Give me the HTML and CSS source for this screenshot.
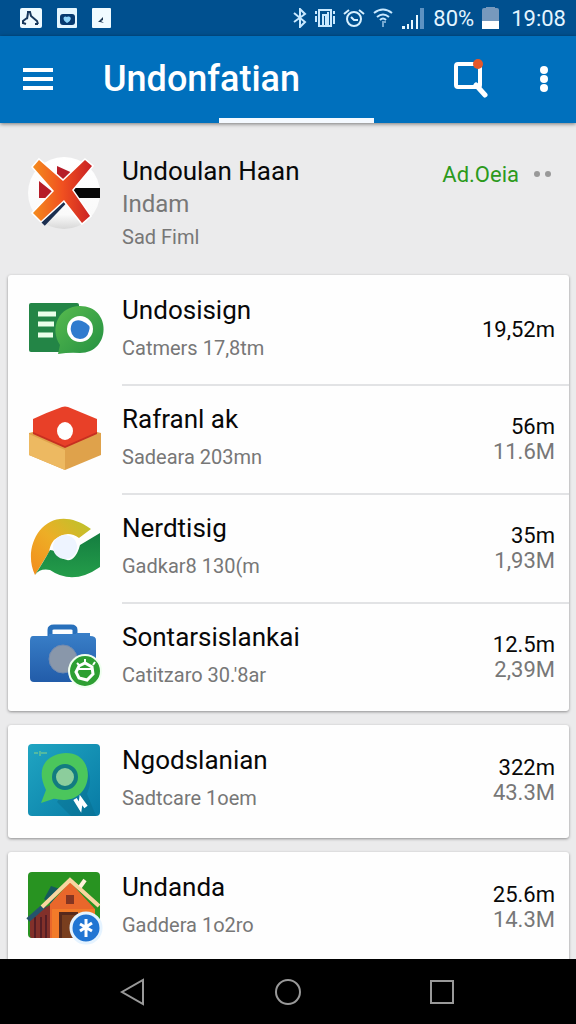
FILE: index.html
```html
<!DOCTYPE html>
<html lang="en">
<head>
<meta charset="utf-8">
<meta name="viewport" content="width=device-width, initial-scale=1">
<title>Undonfatian</title>
<link rel="stylesheet" href="styles.css">
</head>
<body>
<div class="status">
  <div class="status-apps">
    <svg width="22" height="20" viewBox="0 0 22 20"><rect width="22" height="20" rx="2" fill="#eefaff"/><path d="M3 16v-3l4-3m0-6h3l1 4 6 5 1 3M8 5l-1 6M3 15l3 1m9 0h3" fill="none" stroke="#17375b" stroke-width="2"/></svg>
    <svg width="20" height="20" viewBox="0 0 20 20"><rect width="20" height="20" rx="1" fill="#e4f6ff"/><rect x="3" y="6" width="15" height="11" rx="3" fill="#073a70"/><path d="M10 15C4 11 7 7 10 9c4-2 6 3 0 6z" fill="#8ed4fa"/></svg>
    <svg width="19" height="20" viewBox="0 0 19 20"><rect width="19" height="20" rx="1" fill="#f0fbff"/><path d="M6 14l5-5v3l-2 1 3 2-4-1z" fill="#1b3550"/></svg>
  </div>
  <div class="status-system">
    <svg width="14" height="20" viewBox="0 0 14 20"><path d="M1 5l11 9-5 5V1l5 5-11 8" fill="none" stroke="#c9e9ff" stroke-width="2"/></svg>
    <svg width="20" height="20" viewBox="0 0 20 20"><path d="M1 3v3m0 2v6m18-11v3m0 2v8M4 2h12v16H4zM8 18V7h3v11M13 4v14" fill="none" stroke="#c9e9ff" stroke-width="2"/></svg>
    <svg width="22" height="20" viewBox="0 0 22 20"><circle cx="11" cy="11" r="7" fill="none" stroke="#d8f1ff" stroke-width="2"/><path d="M1 6l5-4m15 4l-5-4M8 9l3 3h4" fill="none" stroke="#d8f1ff" stroke-width="2"/></svg>
    <svg width="20" height="20" viewBox="0 0 20 20"><path d="M1 5q9-7 18 0M4 9q6-5 12 0M7 12q3-3 6 0" fill="none" stroke="#c9e9ff" stroke-width="2"/><path d="M10 19v-5h3" fill="none" stroke="#74a7d0" stroke-width="2"/></svg>
    <svg width="24" height="22" viewBox="0 0 24 22"><path d="M1 22v-3h3v3zm5 0v-5h2v5zm4 0v-9h2v9zm5 0V8h2v14z" fill="#e8f8ff"/><path d="M19 22V1h4v21z" fill="#5d92c2"/></svg>
    <span class="status-battery">80%</span>
    <svg width="17" height="22" viewBox="0 0 17 22"><path d="M0 3q0-2 2-2h2V0h9v1h2q2 0 2 2v11H0z" fill="#7799bd"/><path d="M0 14h17v8H0z" fill="#fff"/></svg>
    <span class="status-time">19:08</span>
  </div>
</div>
<header class="appbar">
  <div class="appbar-row">
    <button class="icon-button" aria-label="Menu"><svg width="30" height="24" viewBox="0 0 30 24"><path d="M0 3h30M0 12h30M0 21h30" stroke="#fff" stroke-width="4"/></svg></button>
    <h1 class="title">Undonfatian</h1>
    <button class="icon-button" aria-label="Search"><svg width="34" height="40" viewBox="0 0 34 40"><rect x="2" y="5" width="24" height="23" rx="2" fill="none" stroke="#fff" stroke-width="4"/><path d="M22 26l9 10" stroke="#fff" stroke-width="5" stroke-linecap="round"/><circle cx="24" cy="5" r="5" fill="#e4572b"/></svg></button>
    <button class="icon-button more" aria-label="More options"><svg width="8" height="28" viewBox="0 0 8 28"><g fill="#fff"><circle cx="4" cy="5" r="4"/><circle cx="4" cy="14" r="4"/><circle cx="4" cy="23" r="4"/></g></svg></button>
  </div>
  <div class="tab-indicator"></div>
</header>
<main class="content">
  <section class="profile">
    <svg class="pic" viewBox="0 0 72 72">
      <defs><linearGradient id="cross" x2="1"><stop stop-color="#f48b1d"/><stop offset=".5" stop-color="#f05020"/><stop offset="1" stop-color="#c92024"/></linearGradient><linearGradient id="disc" x2="0" y2="1"><stop stop-color="#fff"/><stop offset=".8" stop-color="#fafafa"/><stop offset="1" stop-color="#d8d8d8"/></linearGradient></defs>
      <circle cx="36" cy="36" r="36" fill="url(#disc)"/>
      <path d="M29 9l20 9-10 17-10-11zM11 24l15 12-7 5h-8z" fill="#b61c28"/><path d="M40 31h32v10H46z" fill="#080808"/><path d="M36 45L15 67" stroke="#1c2f50" stroke-width="5"/>
      <path d="M11 3L5 10l21 24L5 56l8 8 23-21 18 23 8-7-18-26L64 9l-7-6-22 21z" fill="#fff" stroke="#fff" stroke-width="3"/>
      <path d="M11 3L5 10l21 24L5 56l8 8 23-21 18 23 8-7-18-26L64 9l-7-6-22 21z" fill="url(#cross)"/>
    </svg>
    <div class="text">
      <h2 class="name">Undoulan Haan</h2>
      <p class="detail place">Indam</p>
      <p class="detail">Sad Fiml</p>
    </div>
    <div class="balance"><span>Ad.Oeia</span><svg width="18" height="6" viewBox="0 0 18 6"><g fill="#999"><circle cx="3" cy="3" r="3"/><circle cx="14" cy="3" r="3"/></g></svg></div>
  </section>

  <ul class="card">
    <li class="row">
      <svg class="pic" viewBox="0 0 72 72"><defs><linearGradient id="bubble" x2="1" y2="1"><stop stop-color="#58bb4e"/><stop offset="1" stop-color="#249042"/></linearGradient></defs><rect x="1" y="9" width="50" height="49" rx="2" fill="#238546"/><path d="M10 20h18M10 30h16M10 41h15" stroke="#eaffe9" stroke-width="5"/><path d="M30 60l2-9c-11-17-1-39 20-39 32 0 31 47 0 47q-10-1-22 1z" fill="url(#bubble)"/><circle cx="52" cy="35" r="13" fill="#fff"/><path d="M45 28q4-3 9-1 10 4 7 10-2 8-9 8-8-1-9-8-1-5 2-9z" fill="#2f7bce"/></svg>
      <div class="text"><h2 class="name">Undosisign</h2><p class="detail">Catmers 17,8tm</p></div>
      <div class="values"><span>19,52m</span></div>
    </li>
    <li class="row">
      <svg class="pic" viewBox="0 0 72 72"><path d="M1 30l36-9 36 9v22L37 67 1 52z" fill="#dfa24b"/><path d="M1 31l36 16v20L1 52z" fill="#edb961"/><path d="M5 17L37 4l32 13v14L37 45 5 31z" fill="#c72f21"/><path d="M5 16Q20 9 34 4q3-1 6 0l29 12v13L37 43 5 29z" fill="#e84028"/><ellipse cx="37" cy="28" rx="8" ry="9" fill="#fff"/></svg>
      <div class="text"><h2 class="name">Rafranl ak</h2><p class="detail">Sadeara 203mn</p></div>
      <div class="values"><span>56m</span><span class="muted">11.6M</span></div>
    </li>
    <li class="row">
      <svg class="pic" viewBox="0 0 72 72"><defs><linearGradient id="arc" x1="0" y1="1" x2="1" y2="0"><stop stop-color="#f38c1d"/><stop offset=".5" stop-color="#edae26"/><stop offset="1" stop-color="#b8c42c"/></linearGradient><linearGradient id="wave" x2="0" y2="1"><stop stop-color="#147d40"/><stop offset="1" stop-color="#249d4a"/></linearGradient></defs><path d="M7 63C-8 32 20-14 63 17L51 26Q39 17 26 28q-4 5-5 12z" fill="url(#arc)"/><path d="M7 63q9-14 15-25 6 0 10 7 14 10 20-12l20-12v34q-27 19-50 3-10-2-15 5z" fill="url(#wave)"/><circle cx="37" cy="35" r="12" fill="#eef4ff"/></svg>
      <div class="text"><h2 class="name">Nerdtisig</h2><p class="detail">Gadkar8 130(m</p></div>
      <div class="values"><span>35m</span><span class="muted">1,93M</span></div>
    </li>
    <li class="row">
      <svg class="pic" viewBox="0 0 72 72"><defs><linearGradient id="bag" x2="0" y2="1"><stop stop-color="#397fc8"/><stop offset="1" stop-color="#225ca9"/></linearGradient></defs><path d="M22 18V9q0-3 4-3h17q4 0 4 3v9" fill="none" stroke="#2870bb" stroke-width="5"/><path d="M5 15h16v-2h27v-1h14v3q6 0 6 4v39q0 3-4 3H6q-4 0-4-4V20q0-5 3-5z" fill="url(#bag)"/><circle cx="35" cy="38" r="14" fill="#8997aa" stroke="#718ab0"/><circle cx="57" cy="50" r="16" fill="#2d9f32" stroke="#f0fff0" stroke-width="2"/><path d="M51 45l6-3 7 4 1 7-6 6-8-2-3-6z" fill="none" stroke="#fff" stroke-width="3"/><path d="M57 38v5m-8-1l3 3m13-1l2-3M51 48h12" stroke="#fff" stroke-width="2"/></svg>
      <div class="text"><h2 class="name">Sontarsislankai</h2><p class="detail">Catitzaro 30.'8ar</p></div>
      <div class="values"><span>12.5m</span><span class="muted">2,39M</span></div>
    </li>
  </ul>

  <ul class="card">
    <li class="row">
      <svg class="pic" viewBox="0 0 72 72"><defs><linearGradient id="tile" x2="1" y2="1"><stop stop-color="#20a5c2"/><stop offset="1" stop-color="#087ba5"/></linearGradient></defs><rect width="72" height="72" rx="4" fill="url(#tile)"/><path d="M29 58l25-42q13 17 5 34L68 72H43z" fill="#076a87" opacity=".4"/><path d="M13 59l5-13C5 20 24 9 38 9c31 0 28 47-2 47-5 0-9-2-11-1z" fill="#4bc65c"/><circle cx="37" cy="33" r="11" fill="#8ccd9c" stroke="#127b80" stroke-width="4"/><path d="M6 9h4m2-2v5m1-3h6" stroke="#8bd484"/><path d="M47 55l5 8 1-7 5 7" fill="none" stroke="#fff" stroke-width="4"/></svg>
      <div class="text"><h2 class="name">Ngodslanian</h2><p class="detail">Sadtcare 1oem</p></div>
      <div class="values"><span>322m</span><span class="muted">43.3M</span></div>
    </li>
  </ul>

  <ul class="card">
    <li class="row">
      <svg class="pic" viewBox="0 0 72 72"><rect y="1" width="72" height="66" rx="4" fill="#289321"/><path d="M16 28l7-13 9 3-9 15z" fill="#155a5c"/><path d="M2 45l20-11v33H4q-2 0-2-2z" fill="#82302a"/><path d="M7 46v21m6-21v21m5-23v23" stroke="#551e25" stroke-width="2"/><path d="M22 33l20-22 25 27v29H22z" fill="#e9672b"/><path d="M24 38h43v29H24z" fill="#f27b29"/><path d="M31 41h19v26H31z" fill="#57291c"/><path d="M34 44h14v23H34z" fill="#793e1e"/><path d="M38 24h8v9h-8z" fill="#853522"/><path d="M0 49l17-15" stroke="#25546c" stroke-width="5"/><path d="M14 36L42 9l29 26" fill="none" stroke="#f9d6a0" stroke-width="4"/><path d="M52 16l5-7" stroke="#fff2db" stroke-width="4"/><circle cx="58" cy="57" r="15" fill="#2175d3" stroke="#e5f3ff" stroke-width="3"/><path d="M58 48v18m-6-13l12 7m0-8l-12 8" stroke="#fff" stroke-width="3"/></svg>
      <div class="text"><h2 class="name">Undanda</h2><p class="detail">Gaddera 1o2ro</p></div>
      <div class="values"><span>25.6m</span><span class="muted">14.3M</span></div>
    </li>
  </ul>
</main>
<nav class="navbar">
  <button class="nav-button" aria-label="Back"><svg width="28" height="28" viewBox="0 0 28 28"><path d="M24 2v24L3 14z"/></svg></button>
  <button class="nav-button" aria-label="Home"><svg width="28" height="28" viewBox="0 0 28 28"><circle cx="14" cy="14" r="12"/></svg></button>
  <button class="nav-button" aria-label="Recent apps"><svg width="28" height="28" viewBox="0 0 28 28"><path d="M2 3h22v22H2z"/></svg></button>
</nav>
</body>
</html>
```

FILE: styles.css
```css
* { box-sizing: border-box; }

body {
  margin: 0;
  height: 100vh;
  display: flex;
  flex-direction: column;
  background: #ebebec;
  color: #080808;
  font-family: Roboto, "Liberation Sans", sans-serif;
}

h1, h2, p, ul { margin: 0; padding: 0; font-weight: 400; }

button {
  border: 0;
  padding: 0;
  background: none;
}

svg { display: block; flex: none; }

.status {
  flex: none;
  display: flex;
  justify-content: space-between;
  align-items: center;
  height: 36px;
  padding: 0 10px 0 20px;
  background: #00508f;
  color: #e4f5ff;
  font-size: 22px;
}

.status-apps { display: flex; gap: 15px; }
.status-system { display: flex; align-items: center; gap: 8px; }
.status-time { margin-left: 4px; }

.appbar {
  flex: none;
  position: relative;
  z-index: 1;
  background: #0070bd;
  box-shadow: 0 1px 4px rgba(0, 0, 0, .5);
}

.appbar-row {
  display: flex;
  align-items: center;
  height: 82px;
  padding: 4px 28px 0 23px;
}

.icon-button { flex: none; }
.more { margin-left: 52px; }

.title {
  flex: 1;
  margin-left: 50px;
  color: #fff;
  font-size: 36px;
  font-weight: 500;
  line-height: 44px;
}

.tab-indicator {
  width: 27%;
  height: 5px;
  margin-left: 38%;
  background: #f4f9ff;
}

.content {
  flex: 1;
  min-height: 0;
  overflow-y: auto;
  scrollbar-width: none;
}

.profile {
  display: flex;
  padding: 32px 24px 21px 28px;
}

.pic { width: 72px; height: 72px; overflow: visible; }
.profile .pic { margin-top: 2px; }

.text { flex: 1; margin-left: 22px; }

.name { font-size: 26px; line-height: 38px; }
.detail { font-size: 20px; line-height: 39px; color: #777; }
.profile .name, .profile .detail { line-height: 33px; }
.profile .place { font-size: 24px; }

.balance {
  display: flex;
  align-items: center;
  gap: 15px;
  height: 38px;
  color: #2c9a1c;
  font-size: 22px;
}

.card {
  margin: 0 7px 14px 8px;
  border-radius: 3px;
  background: #fefefe;
  box-shadow: 0 1px 3px rgba(0, 0, 0, .4);
  list-style: none;
}

.row {
  display: flex;
  align-items: center;
  padding: 16px 14px 16px 20px;
  position: relative;
}

.row:only-child { padding-bottom: 20px; }

.row + .row::before {
  content: "";
  position: absolute;
  top: 0;
  left: 114px;
  right: 0;
  height: 2px;
  background: #e2e3e5;
}

.values {
  display: flex;
  flex-direction: column;
  align-items: flex-end;
  font-size: 22px;
  line-height: 25px;
}

.muted { color: #777; }

.navbar {
  flex: none;
  display: flex;
  justify-content: center;
  align-items: center;
  gap: 22%;
  height: 65px;
  background: #000;
}

.nav-button svg { fill: none; stroke: #999; stroke-width: 2; }
```
